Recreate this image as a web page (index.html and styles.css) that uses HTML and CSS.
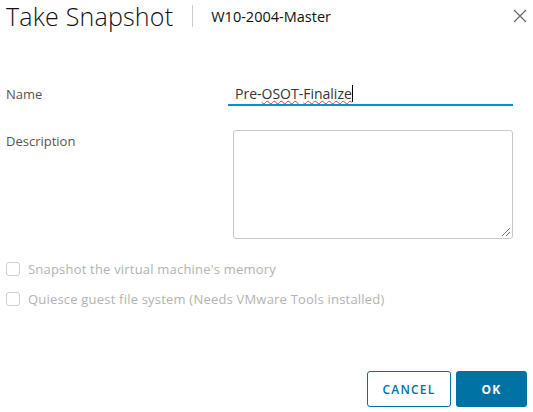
FILE: index.html
```html
<!DOCTYPE html>
<html lang="en">
<head>
  <meta charset="UTF-8" />
  <title>Take Snapshot</title>
  <link rel="stylesheet" href="styles.css">
</head>
<body>
  <div class="modal">
    <div class="modal-header">
      <h3 class="modal-title">Take Snapshot</h3>
      <span class="divider"></span>
      <span class="vm-name">W10-2004-Master</span>
      <button class="close" type="button" aria-label="Close">
        <svg width="14" height="14" viewBox="0 0 14 14">
          <path d="M1 1 L13 13 M13 1 L1 13" stroke="#6a6a6a" stroke-width="1.2" fill="none" />
        </svg>
      </button>
    </div>

    <div class="modal-body">
      <div class="row row-name">
        <label class="label">Name</label>
        <div class="text-input">
          <span>Pre-</span><span class="typo">OSOT</span><span>-</span><span class="typo">Finalize</span><span class="caret"></span>
        </div>
      </div>
      <div class="row row-desc">
        <label class="label">Description</label>
        <div class="textarea"><span class="grip"></span></div>
      </div>
      <div class="checks">
        <label class="check"><span class="box"></span>Snapshot the virtual machine's memory</label>
        <label class="check"><span class="box"></span>Quiesce guest file system (Needs VMware Tools installed)</label>
      </div>
    </div>

    <div class="modal-footer">
      <button class="btn btn-outline" type="button">Cancel</button>
      <button class="btn btn-primary" type="button">OK</button>
    </div>
  </div>
</body>
</html>
```

FILE: styles.css
```css
body {
  margin: 0;
  background: #fff;
  font-family: 'Open Sans', 'Noto Sans', sans-serif;
  color: #565656;
}
.modal {
  width: 533px;
  height: 412px;
  padding: 0 6px;
  box-sizing: border-box;
  display: flex;
  flex-direction: column;
}
.modal-header {
  display: flex;
  align-items: center;
  height: 32px;
}
.modal-title {
  margin: 0;
  font-size: 25px;
  font-weight: 300;
  color: #111;
  letter-spacing: 0.2px;
}
.divider {
  width: 1px;
  height: 22px;
  background: #ccc;
  margin: 0 18px 0 19px;
}
.vm-name {
  font-size: 14.5px;
  color: #111;
}
.close {
  margin-left: auto;
  background: none;
  border: none;
  padding: 0;
  width: 14px;
  height: 14px;
  display: flex;
}
.modal-body {
  flex: 1;
  padding-right: 14px;
}
.row {
  display: flex;
}
.label {
  width: 222px;
  font-size: 13px;
  color: #565656;
}
.row-name {
  margin-top: 50px;
  align-items: flex-end;
}
.row-name .label {
  padding-bottom: 3px;
}
.text-input {
  flex: 1;
  height: 22px;
  border-bottom: 2px solid #0095d3;
  padding-left: 7px;
  font-size: 14px;
  color: #333;
  display: flex;
  align-items: center;
}
.typo {
  text-decoration: underline wavy #e03a3a;
  text-decoration-thickness: 1px;
  text-underline-offset: 1px;
}
.caret {
  width: 1px;
  height: 17px;
  background: #000;
}
.row-desc {
  margin-top: 24px;
}
.row-desc .label {
  width: 227px;
  padding-top: 2px;
}
.textarea {
  flex: 1;
  height: 107px;
  border: 1px solid #c8c8c8;
  border-radius: 3px;
  position: relative;
}
.grip {
  position: absolute;
  right: 2px;
  bottom: 2px;
  width: 8px;
  height: 8px;
  background: linear-gradient(135deg, transparent 45%, #777 45%, #777 52%, transparent 52%, transparent 70%, #777 70%, #777 77%, transparent 77%);
}
.checks {
  margin-top: 23px;
  display: flex;
  flex-direction: column;
  gap: 16px;
}
.check {
  display: flex;
  align-items: center;
  font-size: 13px;
  letter-spacing: 0.2px;
  color: #b3b3b3;
  height: 14px;
}
.box {
  width: 12px;
  height: 12px;
  border: 1px solid #cfcfcf;
  border-radius: 3px;
  margin-right: 8px;
}
.modal-footer {
  display: flex;
  justify-content: flex-end;
  gap: 5px;
  padding-bottom: 5px;
}
.btn {
  height: 36px;
  border-radius: 3px;
  font-family: 'Open Sans', sans-serif;
  font-size: 12px;
  font-weight: 700;
  letter-spacing: 1.2px;
  text-transform: uppercase;
  cursor: pointer;
}
.btn-outline {
  width: 84px;
  background: #fff;
  color: #0072a3;
  border: 1px solid #0072a3;
  font-weight: 600;
}
.btn-primary {
  width: 71px;
  background: #0072a3;
  color: #fff;
  border: none;
}
```
